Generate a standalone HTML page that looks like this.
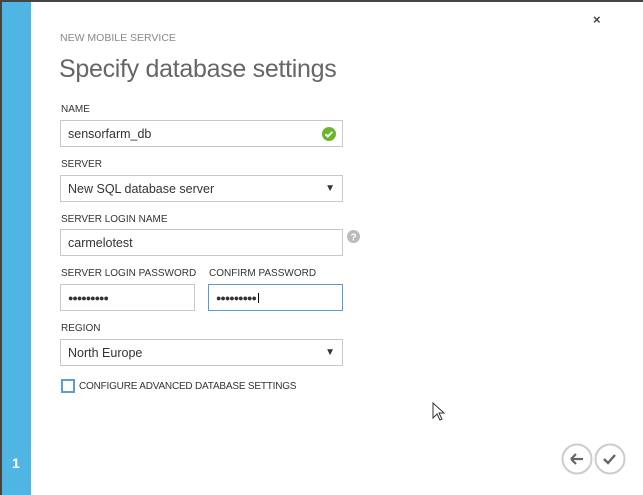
<!DOCTYPE html>
<html><head><style>
body{margin:0;width:643px;height:495px;overflow:hidden;background:#fff;font-family:"Liberation Sans",sans-serif;position:relative}
.a{position:absolute}
.lbl{position:absolute;left:61px;font-size:10px;color:#333}
.box{position:absolute;border:1px solid #c8c8c8;height:27px;box-sizing:border-box;font-size:12.5px;color:#333;line-height:26px;padding-left:7px}
.arr{position:absolute;right:7px;top:0;font-size:10px}
</style></head><body>
<div class="a" style="left:0;top:0;width:643px;height:2px;background:#444"></div>
<div class="a" style="left:0;top:0;width:2px;height:495px;background:#444"></div>
<div class="a" style="left:2px;top:2px;width:29px;height:493px;background:#4fb5e2"></div>
<div class="a" style="left:12px;top:455px;color:#fff;font-size:14px;font-weight:bold">1</div>
<div class="a" style="left:593px;top:12px;font-size:13px;color:#444;font-weight:bold">×</div>
<div class="a" style="left:60px;top:32px;font-size:10.5px;color:#888">NEW MOBILE SERVICE</div>
<div class="a" style="left:59px;top:55px;font-size:25px;color:#666;letter-spacing:-0.3px">Specify database settings</div>
<div class="lbl" style="top:104px">NAME</div>
<div class="box" style="left:60px;top:120px;width:283px">sensorfarm_db
<svg class="a" style="right:6px;top:6px" width="14" height="14"><circle cx="7" cy="7" r="7" fill="#6bb52d"/><path d="M3.5 7.2l2.3 2.3 4.5-4.6" stroke="#fff" stroke-width="2" fill="none"/></svg></div>
<div class="lbl" style="top:159px">SERVER</div>
<div class="box" style="left:60px;top:175px;width:283px">New SQL database server<span class="arr">▼</span></div>
<div class="lbl" style="top:214px">SERVER LOGIN NAME</div>
<div class="box" style="left:60px;top:229px;width:283px">carmelotest</div>
<svg class="a" style="left:347px;top:230px" width="13" height="13"><circle cx="6.5" cy="6.5" r="6.5" fill="#bbb"/><text x="6.5" y="10.5" font-size="10" font-weight="bold" fill="#fff" text-anchor="middle" font-family="Liberation Sans">?</text></svg>
<div class="lbl" style="top:268px">SERVER LOGIN PASSWORD</div>
<div class="lbl" style="top:268px;left:209px">CONFIRM PASSWORD</div>
<div class="box" style="left:60px;top:284px;width:135px;font-size:9px;letter-spacing:-1px">●●●●●●●●●</div>
<div class="box" style="left:208px;top:284px;width:135px;border-color:#5a9bd5;font-size:9px;letter-spacing:-1px">●●●●●●●●●<span style="border-left:1px solid #000;margin-left:2px"></span></div>
<div class="lbl" style="top:323px">REGION</div>
<div class="box" style="left:60px;top:339px;width:283px">North Europe<span class="arr">▼</span></div>
<div class="a" style="left:61px;top:379px;width:14px;height:14px;box-sizing:border-box;border:2px solid #5a9fcf"></div>
<div class="a" style="left:79px;top:381px;font-size:10px;color:#333;letter-spacing:-0.2px">CONFIGURE ADVANCED DATABASE SETTINGS</div>
<svg class="a" style="left:432px;top:402px" width="14" height="20"><path d="M1 1v15l4-4 3 6 2-1-3-6h5z" fill="#fff" stroke="#333" stroke-width="1"/></svg>
<svg class="a" style="left:561px;top:443px" width="70" height="32"><circle cx="16" cy="16" r="14.5" fill="#fff" stroke="#ccc" stroke-width="2"/><path d="M10 16h12M10 16l5-5M10 16l5 5" stroke="#666" stroke-width="2.2" fill="none"/><circle cx="49" cy="16" r="14.5" fill="#fff" stroke="#ccc" stroke-width="2"/><path d="M43 16l4 4 7-8" stroke="#666" stroke-width="2.4" fill="none"/></svg>
</body></html>
